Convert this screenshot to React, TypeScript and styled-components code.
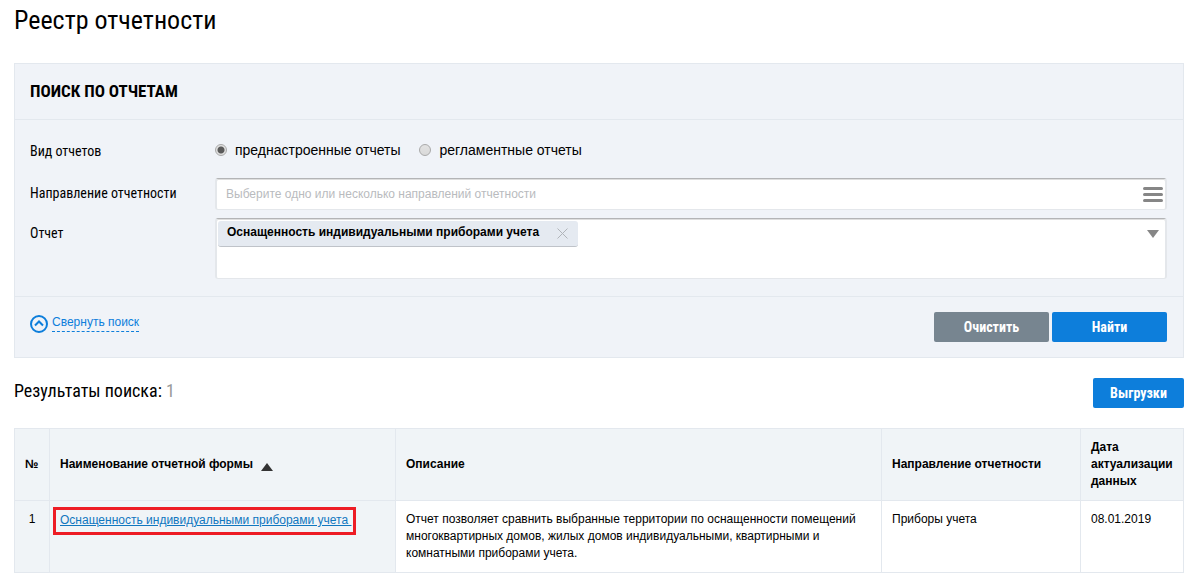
import React, { useState } from "react";
import styled, { createGlobalStyle } from "styled-components";

const condensed = `"Roboto Condensed", "Liberation Sans Narrow", Roboto, sans-serif`;
const line = "#e3e8ee";
const blue = "#0d7edb";

const GlobalStyle = createGlobalStyle`
  *, *::before, *::after { box-sizing: border-box; }
  body {
    margin: 0;
    background: #fff;
    color: #000;
    font: 12px/17px "Liberation Sans", Arial, sans-serif;
  }
  button, input { font: inherit; color: inherit; }
`;

const Page = styled.main`
  padding: 4px 11px 14px 14px;
`;

const Title = styled.h1`
  margin: 0 0 27px;
  font: 400 26px/32px ${condensed};
`;

const Panel = styled.form`
  border: 1px solid ${line};
  background: #f0f3f8;
`;

const PanelTitle = styled.h2`
  margin: 0;
  padding: 15px 15px 16px;
  border-bottom: 1px solid ${line};
  font: 700 17px/24px ${condensed};
  text-transform: uppercase;
`;

const Fields = styled.div`
  display: grid;
  grid-template-columns: 170px 1fr;
  column-gap: 15px;
  row-gap: 8px;
  padding: 18px 16px 17px 15px;
`;

const fieldText = `
  padding-top: 3px;
  font: 400 14px/24px ${condensed};
`;

const FieldLabel = styled.label`
  ${fieldText}
`;

const GroupLabel = styled.span`
  ${fieldText}
  padding-top: 1px;
`;

const RadioGroup = styled.div`
  display: flex;
  gap: 19px;
  height: 32px;
`;

const RadioLabel = styled.label`
  display: flex;
  align-items: center;
  gap: 8px;
  height: 24px;
  font-size: 14px;
`;

const Radio = styled.input.attrs({ type: "radio" })`
  appearance: none;
  width: 12px;
  height: 12px;
  margin: 0;
  border: 1px solid #a9a9a9;
  border-radius: 50%;
  background: linear-gradient(#e2e2e2, #d9d9d9);
  &:checked {
    background: radial-gradient(circle, #5a5a5a 0 3px, #e0e0e0 4px);
  }
`;

const Box = styled.div<{ $height: number }>`
  display: flex;
  align-items: flex-start;
  min-height: ${(p) => p.$height}px;
  border: 1px solid #e4e7eb;
  border-width: 1px 2px;
  border-top-color: #b3b4b6;
  border-radius: 3px;
  background: #fff;
  box-shadow: inset 0 1px 0 #dedede;
`;

const TextInput = styled.input`
  flex: 1;
  min-width: 0;
  height: 30px;
  padding: 0 9px;
  border: 0;
  outline: 0;
  background: transparent;
  &::placeholder { color: #b9bbbe; opacity: 1; }
`;

const IconButton = styled.button`
  display: flex;
  align-items: center;
  justify-content: center;
  width: 25px;
  height: 30px;
  padding: 0;
  border: 0;
  background: none;
`;

const Chip = styled.span`
  display: flex;
  height: 26px;
  margin: 2px 0 0 1px;
  padding-left: 9px;
  border-bottom: 1px solid #bfc3c9;
  border-radius: 3px;
  background: #e5eaf1;
  font-weight: 700;
  line-height: 22px;
`;

const ChipRemove = styled.button`
  display: flex;
  align-items: center;
  margin-left: 8px;
  padding: 0 10px;
  border: 0;
  background: none;
`;

const PanelFooter = styled.div`
  display: flex;
  justify-content: space-between;
  align-items: flex-start;
  padding: 15px 16px 15px 15px;
  border-top: 1px solid ${line};
`;

const Collapse = styled.button`
  display: flex;
  align-items: center;
  gap: 4px;
  height: 24px;
  padding: 0;
  border: 0;
  background: none;
  color: ${blue};
  span {
    margin-bottom: 3px;
    border-bottom: 1px dashed ${blue};
  }
`;

const Actions = styled.div`
  display: flex;
  gap: 3px;
`;

const Button = styled.button<{ $width: number; $muted?: boolean }>`
  width: ${(p) => p.$width}px;
  height: 30px;
  padding: 0;
  border: 0;
  border-radius: 2px;
  background: ${(p) => (p.$muted ? "#778590" : blue)};
  color: #fff;
  font: 700 14px/30px ${condensed};
`;

const ResultsBar = styled.div`
  display: flex;
  justify-content: space-between;
  margin: 20px 0;
`;

const ResultsTitle = styled.h2`
  margin: 0;
  font: 400 18px/26px ${condensed};
  span { color: #999; }
`;

const Table = styled.table`
  width: 100%;
  border-collapse: collapse;
  table-layout: fixed;
`;

const Col = styled.col<{ $width?: number }>`
  width: ${(p) => (p.$width ? `${p.$width}px` : "auto")};
`;

const Th = styled.th`
  padding: 10px;
  border: 1px solid ${line};
  background: #f0f4f7;
  text-align: left;
`;

const Td = styled.td<{ $shaded?: boolean; $center?: boolean; $framed?: boolean }>`
  padding: ${(p) => (p.$framed ? "6px 3px" : "10px")};
  border: 1px solid ${line};
  background: ${(p) => (p.$shaded ? "#f0f4f7" : "#fff")};
  text-align: ${(p) => (p.$center ? "center" : "left")};
  vertical-align: top;
`;

const SortButton = styled.button`
  display: flex;
  align-items: center;
  gap: 8px;
  padding: 0;
  border: 0;
  background: none;
  font-weight: 700;
  svg { margin-top: 5px; }
`;

const Frame = styled.span`
  display: inline-block;
  padding: 2px 2px 3px 4px;
  border: 3px solid #ed1c24;
`;

const ReportLink = styled.a`
  color: #1177bf;
`;

export default function App() {
  const [kind, setKind] = useState("preset");
  return (
    <>
      <GlobalStyle />
      <Page>
        <Title>Реестр отчетности</Title>
        <Panel onSubmit={(e) => e.preventDefault()}>
          <PanelTitle>Поиск по отчетам</PanelTitle>
          <Fields>
            <GroupLabel id="kind-label">Вид отчетов</GroupLabel>
            <RadioGroup role="radiogroup" aria-labelledby="kind-label">
              <RadioLabel>
                <Radio name="kind" checked={kind === "preset"} onChange={() => setKind("preset")} />
                преднастроенные отчеты
              </RadioLabel>
              <RadioLabel>
                <Radio name="kind" checked={kind === "regular"} onChange={() => setKind("regular")} />
                регламентные отчеты
              </RadioLabel>
            </RadioGroup>

            <FieldLabel htmlFor="direction">Направление отчетности</FieldLabel>
            <Box $height={32}>
              <TextInput id="direction" placeholder="Выберите одно или несколько направлений отчетности" />
              <IconButton type="button" aria-label="Открыть справочник">
                <svg width="20" height="15" viewBox="0 0 20 15" stroke="#868686" strokeWidth="3" strokeLinecap="round">
                  <path d="M1.5 1.500h17M1.5 7.500h17M1.5 13.500h17" />
                </svg>
              </IconButton>
            </Box>

            <FieldLabel htmlFor="report">Отчет</FieldLabel>
            <Box $height={61}>
              <Chip>
                Оснащенность индивидуальными приборами учета
                <ChipRemove type="button" aria-label="Удалить">
                  <svg width="11" height="11" viewBox="0 0 11 11" stroke="#b0b4b9">
                    <path d="M0.500 0.500l10 10M10.500 0.500l-10 10" />
                  </svg>
                </ChipRemove>
              </Chip>
              <TextInput id="report" />
              <IconButton type="button" aria-label="Открыть список">
                <svg width="12" height="8" viewBox="0 0 12 8" fill="#868686">
                  <path d="M0 0h12L6 8z" />
                </svg>
              </IconButton>
            </Box>
          </Fields>
          <PanelFooter>
            <Collapse type="button">
              <svg width="18" height="18" viewBox="0 0 18 18" fill="none" stroke={blue} strokeWidth="2">
                <circle cx="9" cy="9" r="8" />
                <path d="M5 10.500l4-4 4 4" />
              </svg>
              <span>Свернуть поиск</span>
            </Collapse>
            <Actions>
              <Button type="reset" $width={115} $muted>Очистить</Button>
              <Button type="submit" $width={115}>Найти</Button>
            </Actions>
          </PanelFooter>
        </Panel>

        <ResultsBar>
          <ResultsTitle>
            Результаты поиска: <span>1</span>
          </ResultsTitle>
          <Button type="button" $width={91}>Выгрузки</Button>
        </ResultsBar>

        <Table>
          <colgroup>
            <Col $width={35} />
            <Col $width={346} />
            <Col />
            <Col $width={199} />
            <Col $width={103} />
          </colgroup>
          <thead>
            <tr>
              <Th>№</Th>
              <Th aria-sort="ascending">
                <SortButton type="button">
                  Наименование отчетной формы
                  <svg width="12" height="8" viewBox="0 0 12 8" fill="#333">
                    <path d="M0 8h12L6 0z" />
                  </svg>
                </SortButton>
              </Th>
              <Th>Описание</Th>
              <Th>Направление отчетности</Th>
              <Th>Дата актуализации данных</Th>
            </tr>
          </thead>
          <tbody>
            <tr>
              <Td $shaded $center>1</Td>
              <Td $shaded $framed>
                <Frame>
                  <ReportLink href="#report">Оснащенность индивидуальными приборами учета&nbsp;</ReportLink>
                </Frame>
              </Td>
              <Td>
                Отчет позволяет сравнить выбранные территории по оснащенности помещений многоквартирных
                домов, жилых домов индивидуальными, квартирными и комнатными приборами учета.
              </Td>
              <Td>Приборы учета</Td>
              <Td>08.01.2019</Td>
            </tr>
          </tbody>
        </Table>
      </Page>
    </>
  );
}
